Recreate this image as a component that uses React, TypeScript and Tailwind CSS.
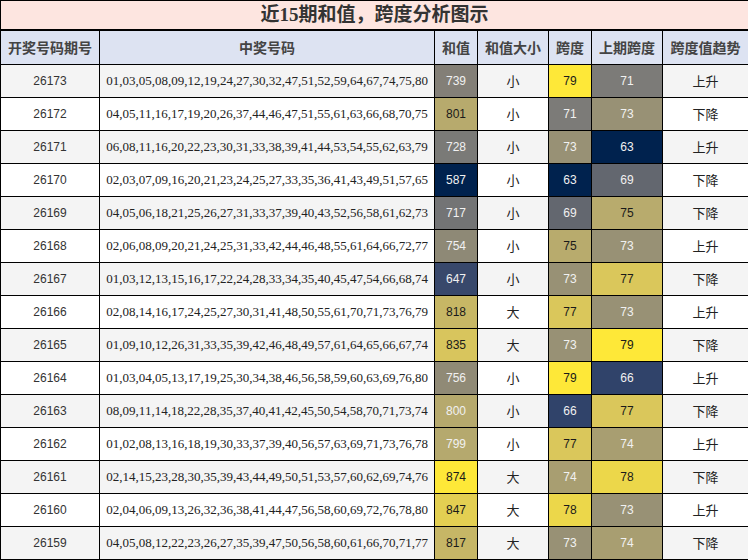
type Row = {
  period: string;
  nums: string;
  sum: number;
  sumBg: string;
  sumLight: boolean;
  size: string;
  span: number;
  spanBg: string;
  spanLight: boolean;
  prev: number;
  prevBg: string;
  prevLight: boolean;
  trend: string;
};

const rows: Row[] = [
  { period: '26173', nums: '01,03,05,08,09,12,19,24,27,30,32,47,51,52,59,64,67,74,75,80', sum: 739, sumBg: 'bg-[#837f77]', sumLight: true, size: '小', span: 79, spanBg: 'bg-[#fee838]', spanLight: false, prev: 71, prevBg: 'bg-[#7c7b78]', prevLight: true, trend: '上升' },
  { period: '26172', nums: '04,05,11,16,17,19,20,26,37,44,46,47,51,55,61,63,66,68,70,75', sum: 801, sumBg: 'bg-[#b7aa6d]', sumLight: false, size: '小', span: 71, spanBg: 'bg-[#7c7b78]', spanLight: true, prev: 73, prevBg: 'bg-[#989175]', prevLight: true, trend: '下降' },
  { period: '26171', nums: '06,08,11,16,20,22,23,30,31,33,38,39,41,44,53,54,55,62,63,79', sum: 728, sumBg: 'bg-[#7a7a77]', sumLight: true, size: '小', span: 73, spanBg: 'bg-[#989175]', spanLight: true, prev: 63, prevBg: 'bg-[#00224e]', prevLight: true, trend: '上升' },
  { period: '26170', nums: '02,03,07,09,16,20,21,23,24,25,27,33,35,36,41,43,49,51,57,65', sum: 587, sumBg: 'bg-[#00224e]', sumLight: true, size: '小', span: 63, spanBg: 'bg-[#00224e]', spanLight: true, prev: 69, prevBg: 'bg-[#63676f]', prevLight: true, trend: '下降' },
  { period: '26169', nums: '04,05,06,18,21,25,26,27,31,33,37,39,40,43,52,56,58,61,62,73', sum: 717, sumBg: 'bg-[#737475]', sumLight: true, size: '小', span: 69, spanBg: 'bg-[#63676f]', spanLight: true, prev: 75, prevBg: 'bg-[#b8ab6d]', prevLight: false, trend: '下降' },
  { period: '26168', nums: '02,06,08,09,20,21,24,25,31,33,42,44,46,48,55,61,64,66,72,77', sum: 754, sumBg: 'bg-[#8e8976]', sumLight: true, size: '小', span: 75, spanBg: 'bg-[#b8ab6d]', spanLight: false, prev: 73, prevBg: 'bg-[#989175]', prevLight: true, trend: '上升' },
  { period: '26167', nums: '01,03,12,13,15,16,17,22,24,28,33,34,35,40,45,47,54,66,68,74', sum: 647, sumBg: 'bg-[#38486b]', sumLight: true, size: '小', span: 73, spanBg: 'bg-[#989175]', spanLight: true, prev: 77, prevBg: 'bg-[#dac75b]', prevLight: false, trend: '下降' },
  { period: '26166', nums: '02,08,14,16,17,24,25,27,30,31,41,48,50,55,61,70,71,73,76,79', sum: 818, sumBg: 'bg-[#c7b765]', sumLight: false, size: '大', span: 77, spanBg: 'bg-[#dac75b]', spanLight: false, prev: 73, prevBg: 'bg-[#989175]', prevLight: true, trend: '上升' },
  { period: '26165', nums: '01,09,10,12,26,31,33,35,39,42,46,48,49,57,61,64,65,66,67,74', sum: 835, sumBg: 'bg-[#d8c55d]', sumLight: false, size: '大', span: 73, spanBg: 'bg-[#989175]', spanLight: true, prev: 79, prevBg: 'bg-[#fee838]', prevLight: false, trend: '下降' },
  { period: '26164', nums: '01,03,04,05,13,17,19,25,30,34,38,46,56,58,59,60,63,69,76,80', sum: 756, sumBg: 'bg-[#908a76]', sumLight: true, size: '小', span: 79, spanBg: 'bg-[#fee838]', spanLight: false, prev: 66, prevBg: 'bg-[#30436a]', prevLight: true, trend: '上升' },
  { period: '26163', nums: '08,09,11,14,18,22,28,35,37,40,41,42,45,50,54,58,70,71,73,74', sum: 800, sumBg: 'bg-[#b6a96d]', sumLight: true, size: '小', span: 66, spanBg: 'bg-[#30436a]', spanLight: true, prev: 77, prevBg: 'bg-[#dac75b]', prevLight: false, trend: '下降' },
  { period: '26162', nums: '01,02,08,13,16,18,19,30,33,37,39,40,56,57,63,69,71,73,76,78', sum: 799, sumBg: 'bg-[#b5a96e]', sumLight: true, size: '小', span: 77, spanBg: 'bg-[#dac75b]', spanLight: false, prev: 74, prevBg: 'bg-[#a89e71]', prevLight: true, trend: '上升' },
  { period: '26161', nums: '02,14,15,23,28,30,35,39,43,44,49,50,51,53,57,60,62,69,74,76', sum: 874, sumBg: 'bg-[#fee838]', sumLight: false, size: '大', span: 74, spanBg: 'bg-[#a89e71]', spanLight: true, prev: 78, prevBg: 'bg-[#ecd74a]', prevLight: false, trend: '下降' },
  { period: '26160', nums: '02,04,06,09,13,26,32,36,38,41,44,47,56,58,60,69,72,76,78,80', sum: 847, sumBg: 'bg-[#e3cf52]', sumLight: false, size: '大', span: 78, spanBg: 'bg-[#ecd74a]', spanLight: false, prev: 73, prevBg: 'bg-[#989175]', prevLight: true, trend: '上升' },
  { period: '26159', nums: '04,05,08,12,22,23,26,27,35,39,47,50,56,58,60,61,66,70,71,77', sum: 817, sumBg: 'bg-[#c6b666]', sumLight: false, size: '大', span: 73, spanBg: 'bg-[#989175]', spanLight: true, prev: 74, prevBg: 'bg-[#a89e71]', prevLight: true, trend: '下降' },
];

const headers = ['开奖号码期号', '中奖号码', '和值', '和值大小', '跨度', '上期跨度', '跨度值趋势'];

const cell = 'border border-black text-center p-0 whitespace-nowrap';
const sans = "font-['Liberation_Sans','Noto_Sans_CJK_SC',sans-serif] text-[12px]";
const cjk = "font-['Noto_Sans_CJK_SC',sans-serif] text-[13px] text-[#222]";

export default function App() {
  return (
    <div className="w-[748px] h-[560px] overflow-hidden bg-white">
      <table className="w-[748px] table-fixed border-collapse">
        <colgroup>
          <col className="w-[99px]" />
          <col className="w-[335px]" />
          <col className="w-[43px]" />
          <col className="w-[71px]" />
          <col className="w-[43px]" />
          <col className="w-[71px]" />
          <col className="w-[86px]" />
        </colgroup>
        <thead>
          <tr className="h-[29px]">
            <th
              colSpan={7}
              className="border border-black border-b-2 bg-[#fde5e0] p-0 text-center font-['Liberation_Serif','Noto_Sans_CJK_SC',serif] text-[19px] font-bold leading-none text-[#333]"
            >
              近15期和值，跨度分析图示
            </th>
          </tr>
          <tr className="h-[35px] bg-[#dde3f2]">
            {headers.map((h) => (
              <th
                key={h}
                className={`${cell} font-['Noto_Sans_CJK_SC',sans-serif] text-[14px] font-bold text-[#444]`}
              >
                {h}
              </th>
            ))}
          </tr>
        </thead>
        <tbody>
          {rows.map((r, i) => (
            <tr key={r.period} className={i % 2 === 0 ? 'h-[33px] bg-[#f4f4f4]' : 'h-[33px] bg-white'}>
              <td className={`${cell} ${sans} text-[#333]`}>{r.period}</td>
              <td className={`${cell} font-['Liberation_Serif',serif] text-[13px] text-[#222]`}>{r.nums}</td>
              <td className={`${cell} ${sans} ${r.sumBg} ${r.sumLight ? 'text-[#f1f1f1]' : 'text-[#1a1a1a]'}`}>{r.sum}</td>
              <td className={`${cell} ${cjk}`}>{r.size}</td>
              <td className={`${cell} ${sans} ${r.spanBg} ${r.spanLight ? 'text-[#f1f1f1]' : 'text-[#1a1a1a]'}`}>{r.span}</td>
              <td className={`${cell} ${sans} ${r.prevBg} ${r.prevLight ? 'text-[#f1f1f1]' : 'text-[#1a1a1a]'}`}>{r.prev}</td>
              <td className={`${cell} ${cjk}`}>{r.trend}</td>
            </tr>
          ))}
        </tbody>
      </table>
    </div>
  );
}
